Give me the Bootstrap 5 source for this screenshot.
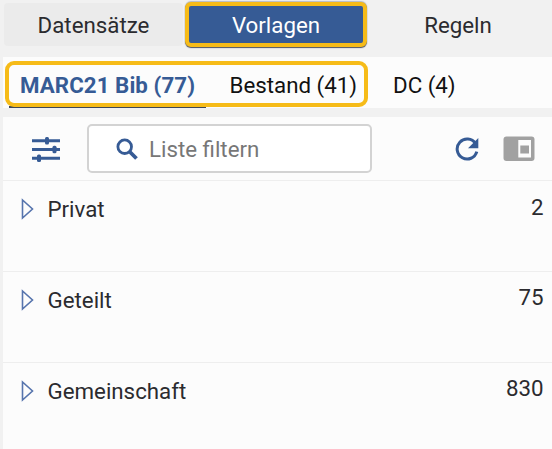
<!DOCTYPE html>
<html lang="de">
<head>
<meta charset="utf-8">
<meta name="viewport" content="width=device-width, initial-scale=1">
<title>Vorlagen</title>
<link href="https://cdn.jsdelivr.net/npm/bootstrap@5.3.0/dist/css/bootstrap.min.css" rel="stylesheet">
<style>
body{font-family:Roboto,sans-serif;font-size:22.3px;line-height:26px;color:#2b2b2f;background:#f1f1f1;height:449px;overflow:hidden}
.main-tabs{height:57px;padding:2px 0 0 4px}
.main-tabs .nav-link{color:#2b2b2f;padding:0;height:43px;display:flex;align-items:center;justify-content:center;border-radius:4px}
.main-tabs .tab-data{width:179px;margin-top:1px;background:#ebebeb}
.main-tabs .tab-templates{width:182px;height:45px;margin-left:1.5px;padding-left:1px;color:#fff;background:#365b95;border:4px solid #f6bb18;border-radius:6px;box-shadow:0 1px 1px #4c5260,0 -1px 1px #85889088}
.main-tabs .tab-rules{width:183px;margin-top:1px}
.sub-tabs{height:51px;margin-left:3px;background:#fcfcfc;margin-bottom:9px}
.sub-tabs .nav-link{color:#111;padding:0;height:51px;padding-top:15px;white-space:nowrap}
.sub-tabs .tab-bib{width:197px;margin-left:6px;padding-left:11px;color:#365b95;font-weight:700;letter-spacing:.06px;border-bottom:2px solid #3d4858;border-radius:0}
.sub-tabs .tab-hold{width:163px;padding-left:23.5px}
.marker{left:2px;top:4px;width:363px;height:46px;border:4px solid #f6bb18;border-radius:9px;pointer-events:none}
.panel{margin-left:3px;background:#fcfcfc}
.tools{height:64px;border-bottom:1.5px solid #eee;padding:0 17px 0 28px}
.filter-box{width:285px;height:49px;margin-left:26px;border:2px solid #d3d3d3;border-radius:5px;background:#fff;padding-left:27px}
.filter-box input{font-size:22.3px;color:#777;padding:0;margin-left:11px;width:190px;line-height:26px}
.filter-box input::placeholder{color:#777}
.tree-row{height:91px;border-bottom:1.5px solid #eee;padding:15px 8.5px 0 17px}
.tree-row .label-text{margin-left:11.5px}
.tree-row .count{margin-top:-3px}
.tree-row .count-first{margin-top:-2px}
.tree-row svg{margin-top:1px}
</style>
<script src="https://cdn.jsdelivr.net/npm/bootstrap@5.3.0/dist/js/bootstrap.bundle.min.js"></script>
</head>
<body>
<nav class="nav main-tabs flex-nowrap">
  <a class="nav-link tab-data">Datensätze</a>
  <a class="nav-link tab-templates">Vorlagen</a>
  <a class="nav-link tab-rules">Regeln</a>
</nav>
<nav class="nav sub-tabs flex-nowrap position-relative">
  <a class="nav-link tab-bib">MARC21 Bib (77)</a>
  <a class="nav-link tab-hold">Bestand (41)</a>
  <a class="nav-link tab-dc ms-0 ps-4">DC (4)</a>
  <span class="marker position-absolute"></span>
</nav>
<main class="panel">
  <div class="tools d-flex align-items-center">
    <svg width="30" height="28" viewBox="0 0 30 28" fill="#365b95"><path d="M1 4.3h28v3H1zM1 13h28v3H1zM1 21.7h28v3H1z"/><rect x="14" y="2" width="4" height="7.5" rx="1.5"/><rect x="21.5" y="10.7" width="4" height="7.5" rx="1.5"/><rect x="6" y="19.4" width="4" height="7.5" rx="1.5"/></svg>
    <div class="filter-box d-flex align-items-center">
      <svg width="22" height="22" viewBox="0 0 22 22" fill="none" stroke="#365b95"><circle cx="8.7" cy="8.7" r="6.8" stroke-width="2.8"/><path d="M13.5 13.5l7 7" stroke-width="3.8"/></svg>
      <input class="form-control border-0 bg-transparent shadow-none" placeholder="Liste filtern" aria-label="Liste filtern">
    </div>
    <svg class="ms-auto" width="24" height="24" viewBox="0 0 24 24"><path d="M20.5 6.5A10 10 0 1 0 21.8 14.7" fill="none" stroke="#365b95" stroke-width="3"/><path d="M23.3 1v10.3H13z" fill="#365b95"/></svg>
    <svg class="ms-4" width="32" height="26" viewBox="0 0 32 26"><rect x=".5" y=".5" width="31" height="24.5" rx="3" fill="#a1a1a1"/><path d="M15.3 4h12.7v17.5h-12.7z" fill="#fcfcfc"/><path d="M17.3 9.5h8.7v8h-8.7z" fill="#a1a1a1"/></svg>
  </div>
  <div class="tree-row d-flex align-items-start"><svg width="16" height="24" viewBox="0 0 16 24"><path d="M2.5 3v18L12.5 12z" fill="none" stroke="#5674ad" stroke-width="1.6"/></svg><span class="label-text">Privat</span><span class="count count-first ms-auto">2</span></div>
  <div class="tree-row d-flex align-items-start"><svg width="16" height="24" viewBox="0 0 16 24"><path d="M2.5 3v18L12.5 12z" fill="none" stroke="#5674ad" stroke-width="1.6"/></svg><span class="label-text">Geteilt</span><span class="count ms-auto">75</span></div>
  <div class="tree-row d-flex align-items-start border-0"><svg width="16" height="24" viewBox="0 0 16 24"><path d="M2.5 3v18L12.5 12z" fill="none" stroke="#5674ad" stroke-width="1.6"/></svg><span class="label-text">Gemeinschaft</span><span class="count ms-auto">830</span></div>
</main>
</body>
</html>
